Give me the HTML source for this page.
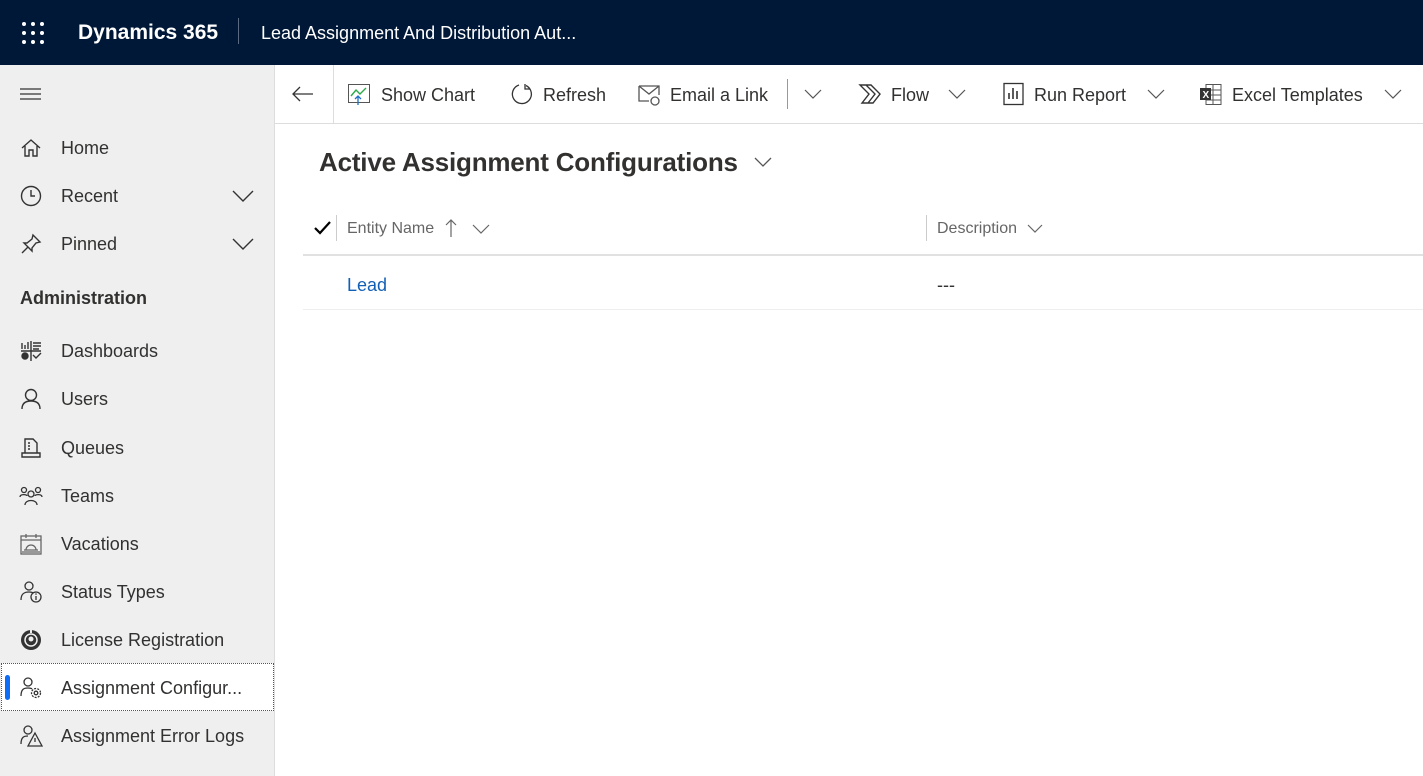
<!DOCTYPE html>
<html><head><meta charset="utf-8"><style>
*{margin:0;padding:0;box-sizing:border-box}
body{width:1423px;height:776px;overflow:hidden;font-family:"Liberation Sans",sans-serif;background:#fff;position:relative;color:#333}
.top{position:absolute;left:0;top:0;width:1423px;height:65px;background:#001837;color:#fff}
.abs{position:absolute;white-space:nowrap}
.side{position:absolute;left:0;top:65px;width:275px;height:711px;background:#efefef;border-right:1px solid #ddd}
.nav{position:absolute;left:61px;font-size:18px;color:#323130;line-height:22px}
.ic{position:absolute;left:20px;width:22px;height:22px}
.cmd{position:absolute;top:84px;font-size:18px;color:#323130;line-height:22px;white-space:nowrap}
svg{overflow:visible}
</style></head><body>
<div class="top">
 <svg class="abs" style="left:22px;top:22px" width="22" height="22">
  <g fill="#fff"><circle cx="2" cy="2" r="2"/><circle cx="11" cy="2" r="2"/><circle cx="20" cy="2" r="2"/><circle cx="2" cy="11" r="2"/><circle cx="11" cy="11" r="2"/><circle cx="20" cy="11" r="2"/><circle cx="2" cy="20" r="2"/><circle cx="11" cy="20" r="2"/><circle cx="20" cy="20" r="2"/></g></svg>
 <div class="abs" style="left:78px;top:20px;font-size:21px;font-weight:bold;line-height:26px">Dynamics 365</div>
 <div class="abs" style="left:238px;top:18px;width:1px;height:26px;background:#5a6a80"></div>
 <div class="abs" style="left:261px;top:22px;font-size:18px;line-height:22px">Lead Assignment And Distribution Aut...</div>
</div>
<div class="side">
 <svg class="abs" style="left:20px;top:23px" width="22" height="12"><g stroke="#333" stroke-width="1.3"><line x1="0" y1="1" x2="21" y2="1"/><line x1="0" y1="6" x2="21" y2="6"/><line x1="0" y1="11" x2="21" y2="11"/></g></svg>
</div>
<!-- nav items -->
<svg class="ic" style="top:137px" viewBox="0 0 22 22"><path d="M2 11 L11 3 L20 11 M5 9 V19 H9 V13 H13 V19 H17 V9" fill="none" stroke="#333" stroke-width="1.4"/></svg>
<div class="nav" style="top:137px">Home</div>
<svg class="ic" style="top:185px" viewBox="0 0 22 22"><circle cx="11" cy="11" r="9.5" fill="none" stroke="#333" stroke-width="1.4"/><path d="M11 5 V11 H15" fill="none" stroke="#333" stroke-width="1.4"/></svg>
<div class="nav" style="top:185px">Recent</div>
<svg class="abs" style="left:232px;top:190px" width="22" height="12"><path d="M1 1 L11 11 L21 1" fill="none" stroke="#333" stroke-width="1.4"/></svg>
<svg class="ic" style="top:233px" viewBox="0 0 22 22"><path d="M13 2 L20 9 L16 10 L12 15 L12 18 L4 10 L7 10 L12 6 Z M8 14 L2 20" fill="none" stroke="#333" stroke-width="1.4"/></svg>
<div class="nav" style="top:233px">Pinned</div>
<svg class="abs" style="left:232px;top:238px" width="22" height="12"><path d="M1 1 L11 11 L21 1" fill="none" stroke="#333" stroke-width="1.4"/></svg>
<div class="abs" style="left:20px;top:287px;font-size:18px;font-weight:bold;color:#323130;line-height:22px">Administration</div>
<svg class="ic" style="top:340px" viewBox="0 0 22 22"><g stroke="#333" stroke-width="1.4" fill="none"><path d="M11 1 V21 M1 11 H21 M2 3 V9 M5 5 V9 M8 2 V9 M13 3 H21 M13 6 H21 M13 9 H19 M13 15 L16 18 L21 13"/><circle cx="5" cy="16" r="3" fill="#333"/></g></svg>
<div class="nav" style="top:340px">Dashboards</div>
<svg class="ic" style="top:388px" viewBox="0 0 22 22"><g stroke="#333" stroke-width="1.4" fill="none"><circle cx="11" cy="7" r="5.5"/><path d="M2 21 C2 15 6 13 11 13 C16 13 20 15 20 21"/></g></svg>
<div class="nav" style="top:388px">Users</div>
<svg class="ic" style="top:437px" viewBox="0 0 22 22"><g stroke="#333" stroke-width="1.4" fill="none"><path d="M5 16 V2 H13 L17 6 V16 M2 16 H20 V20 H2 Z M8 6 H10 M8 9 H10 M8 12 H10"/></g></svg>
<div class="nav" style="top:437px">Queues</div>
<svg class="ic" style="top:485px" viewBox="0 0 22 22"><g stroke="#333" stroke-width="1.3" fill="none"><circle cx="4" cy="5" r="2.5"/><circle cx="18" cy="5" r="2.5"/><circle cx="11" cy="9" r="3"/><path d="M0 12 C0 9 7 9 7 11 M22 12 C22 9 15 9 15 11 M5 20 C5 14 17 14 17 20"/></g></svg>
<div class="nav" style="top:485px">Teams</div>
<svg class="ic" style="top:533px" viewBox="0 0 22 22"><g stroke="#666" stroke-width="1.3" fill="none"><rect x="1" y="3" width="20" height="18"/><path d="M1 7 H21 M6 1 V5 M16 1 V5 M4 17 H18 M6 17 A5 5 0 0 1 16 17"/></g><rect x="2" y="18" width="18" height="2" fill="#999"/></svg>
<div class="nav" style="top:533px">Vacations</div>
<svg class="ic" style="top:581px" viewBox="0 0 22 22"><g stroke="#333" stroke-width="1.3" fill="none"><circle cx="9" cy="5" r="4"/><path d="M1 19 C1 12 5 11 9 11 C11 11 12 11 13 12"/><circle cx="16" cy="16" r="5"/><path d="M16 15 V19"/></g><circle cx="16" cy="13" r="0.8" fill="#333"/></svg>
<div class="nav" style="top:581px">Status Types</div>
<svg class="ic" style="top:629px" viewBox="0 0 22 22"><circle cx="11" cy="11" r="10" fill="#333"/><circle cx="11" cy="11" r="6" fill="none" stroke="#efefef" stroke-width="1.5"/><circle cx="11" cy="10" r="2.5" fill="#efefef"/><path d="M11 1 V4" stroke="#efefef" stroke-width="2"/></svg>
<div class="nav" style="top:629px">License Registration</div>
<div class="abs" style="left:1px;top:663px;width:273px;height:48px;background:#fff;border:1px dotted #555"></div>
<div class="abs" style="left:5px;top:675px;width:5px;height:25px;background:#0f6cf7;border-radius:3px"></div>
<svg class="ic" style="top:677px" viewBox="0 0 22 22"><g stroke="#333" stroke-width="1.3" fill="none"><circle cx="8" cy="5" r="4"/><path d="M1 19 C1 12 4 11 8 11 C10 11 11 11 12 12"/><circle cx="16" cy="16" r="4.5" stroke-dasharray="2 1.2"/><circle cx="16" cy="16" r="1.8"/></g></svg>
<div class="nav" style="top:677px">Assignment Configur...</div>
<svg class="ic" style="top:725px" viewBox="0 0 22 22"><g stroke="#333" stroke-width="1.3" fill="none"><circle cx="8" cy="5" r="4"/><path d="M1 19 C1 12 4 11 8 11 M15 8 L22 21 H8 Z M15 13 V17"/></g></svg>
<div class="nav" style="top:725px">Assignment Error Logs</div>

<!-- command bar -->
<div class="abs" style="left:275px;top:123px;width:1148px;height:1px;background:#ddd"></div>
<div class="abs" style="left:333px;top:65px;width:1px;height:58px;background:#ddd"></div>
<svg class="abs" style="left:292px;top:86px" width="22" height="16"><path d="M21 8 H1 M8 1 L1 8 L8 15" fill="none" stroke="#333" stroke-width="1.3"/></svg>
<svg class="abs" style="left:348px;top:84px" width="22" height="22"><rect x="0.5" y="0.5" width="21" height="18" fill="none" stroke="#555"/><path d="M3 12 L8 6 L12 10 L18 4" fill="none" stroke="#2ba84a" stroke-width="1.4"/><path d="M10 21 V12 M7 15 L10 12 L13 15" fill="none" stroke="#1f6fc5" stroke-width="1.3"/></svg>
<div class="cmd" style="left:381px">Show Chart</div>
<svg class="abs" style="left:511px;top:83px" width="22" height="22"><path d="M8 2 A9.5 9.5 0 1 0 15 2.5 M14 1 V6 H19" fill="none" stroke="#333" stroke-width="1.3"/></svg>
<div class="cmd" style="left:543px">Refresh</div>
<svg class="abs" style="left:638px;top:85px" width="24" height="22"><path d="M1 1 H21 V10 M1 1 V16 H11 M1 1 L11 9 L21 1" fill="none" stroke="#555" stroke-width="1.3"/><circle cx="17" cy="16" r="4" fill="none" stroke="#555" stroke-width="1.3"/></svg>
<div class="cmd" style="left:670px">Email a Link</div>
<div class="abs" style="left:787px;top:79px;width:1px;height:30px;background:#999"></div>
<svg class="abs" style="left:804px;top:89px" width="18" height="10"><path d="M1 1 L9 9 L17 1" fill="none" stroke="#555" stroke-width="1.2"/></svg>
<svg class="abs" style="left:859px;top:84px" width="22" height="20"><path d="M1 1 H12 L21 10 L14 19 H3 L10 10 Z M7 1 L16 10 L9 19" fill="none" stroke="#333" stroke-width="1.4"/></svg>
<div class="cmd" style="left:891px">Flow</div>
<svg class="abs" style="left:948px;top:89px" width="18" height="10"><path d="M1 1 L9 9 L17 1" fill="none" stroke="#555" stroke-width="1.2"/></svg>
<svg class="abs" style="left:1002px;top:83px" width="22" height="22"><rect x="2" y="0.5" width="19" height="21" fill="none" stroke="#333" stroke-width="1.3"/><path d="M7 16 V10 M11 16 V5 M15 16 V8" stroke="#333" stroke-width="1.6"/></svg>
<div class="cmd" style="left:1034px">Run Report</div>
<svg class="abs" style="left:1147px;top:89px" width="18" height="10"><path d="M1 1 L9 9 L17 1" fill="none" stroke="#555" stroke-width="1.2"/></svg>
<svg class="abs" style="left:1200px;top:84px" width="22" height="22"><rect x="6" y="0.5" width="15" height="20" fill="none" stroke="#555"/><path d="M6 6 H21 M6 11 H21 M6 16 H21 M13 1 V20" stroke="#555"/><rect x="0" y="4" width="11" height="12" fill="#333"/><text x="2.5" y="14" font-size="10" fill="#fff" font-family="Liberation Sans" font-weight="bold">X</text></svg>
<div class="cmd" style="left:1232px">Excel Templates</div>
<svg class="abs" style="left:1384px;top:89px" width="18" height="10"><path d="M1 1 L9 9 L17 1" fill="none" stroke="#555" stroke-width="1.2"/></svg>

<!-- view -->
<div class="abs" style="left:319px;top:146px;font-size:26px;font-weight:bold;color:#323130;line-height:32px;letter-spacing:-0.2px">Active Assignment Configurations</div>
<svg class="abs" style="left:754px;top:157px" width="18" height="10"><path d="M1 1 L9 9 L17 1" fill="none" stroke="#555" stroke-width="1.3"/></svg>
<svg class="abs" style="left:314px;top:221px" width="18" height="14"><path d="M1 7 L6 12 L16 1" fill="none" stroke="#000" stroke-width="2.2"/></svg>
<div class="abs" style="left:336px;top:215px;width:1px;height:26px;background:#ccc"></div>
<div class="abs" style="left:347px;top:219px;font-size:16px;color:#666;line-height:20px">Entity Name</div>
<svg class="abs" style="left:445px;top:219px" width="12" height="18"><path d="M6 18 V1 M1 6 L6 1 L11 6" fill="none" stroke="#666" stroke-width="1.2"/></svg>
<svg class="abs" style="left:472px;top:224px" width="18" height="10"><path d="M1 1 L9 9 L17 1" fill="none" stroke="#666" stroke-width="1.2"/></svg>
<div class="abs" style="left:926px;top:215px;width:1px;height:26px;background:#ccc"></div>
<div class="abs" style="left:937px;top:219px;font-size:16px;color:#666;line-height:20px">Description</div>
<svg class="abs" style="left:1027px;top:224px" width="16" height="9"><path d="M1 1 L8 8 L15 1" fill="none" stroke="#666" stroke-width="1.2"/></svg>
<div class="abs" style="left:303px;top:254px;width:1120px;height:2px;background:#e1e1e1"></div>
<div class="abs" style="left:347px;top:274px;font-size:18px;color:#1160b7;line-height:22px">Lead</div>
<div class="abs" style="left:937px;top:274px;font-size:18px;color:#333;line-height:22px">---</div>
<div class="abs" style="left:303px;top:309px;width:1120px;height:1px;background:#eee"></div>
</body></html>
